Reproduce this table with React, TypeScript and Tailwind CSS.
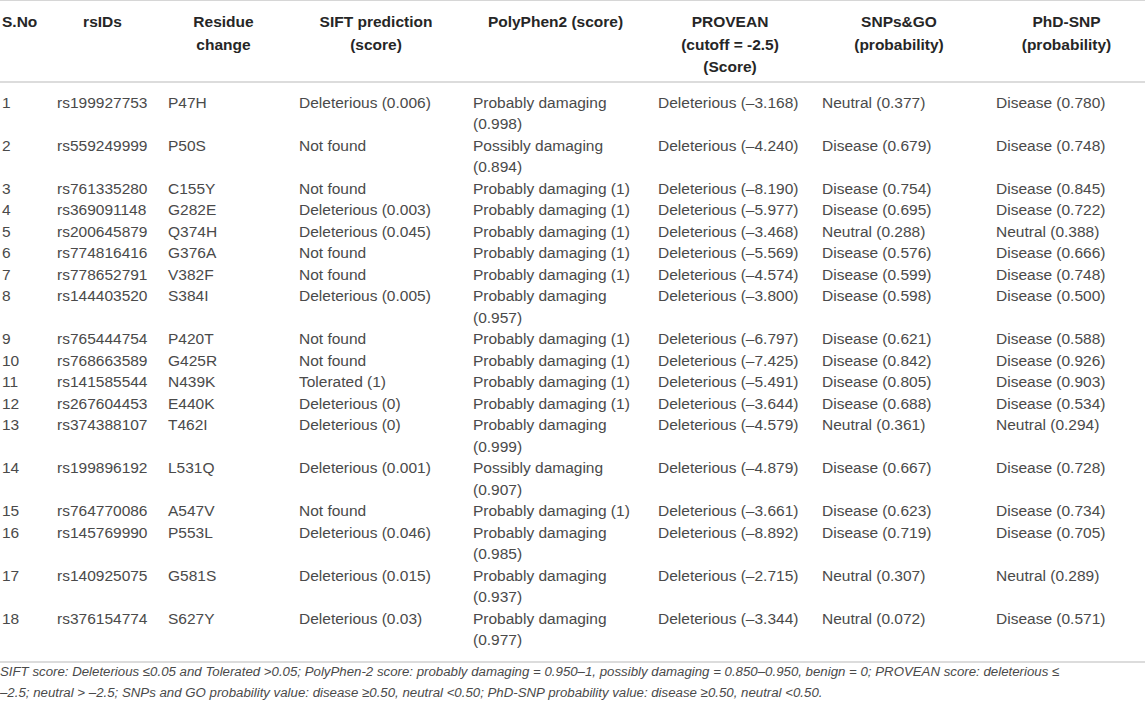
type Row = {
	no: string;
	id: string;
	change: string;
	sift: string;
	poly: string[];
	provean: string;
	snps: string;
	phd: string;
};

const rows: Row[] = [
	{ no: "1", id: "rs199927753", change: "P47H", sift: "Deleterious (0.006)", poly: ["Probably damaging", "(0.998)"], provean: "Deleterious (–3.168)", snps: "Neutral (0.377)", phd: "Disease (0.780)" },
	{ no: "2", id: "rs559249999", change: "P50S", sift: "Not found", poly: ["Possibly damaging", "(0.894)"], provean: "Deleterious (–4.240)", snps: "Disease (0.679)", phd: "Disease (0.748)" },
	{ no: "3", id: "rs761335280", change: "C155Y", sift: "Not found", poly: ["Probably damaging (1)"], provean: "Deleterious (–8.190)", snps: "Disease (0.754)", phd: "Disease (0.845)" },
	{ no: "4", id: "rs369091148", change: "G282E", sift: "Deleterious (0.003)", poly: ["Probably damaging (1)"], provean: "Deleterious (–5.977)", snps: "Disease (0.695)", phd: "Disease (0.722)" },
	{ no: "5", id: "rs200645879", change: "Q374H", sift: "Deleterious (0.045)", poly: ["Probably damaging (1)"], provean: "Deleterious (–3.468)", snps: "Neutral (0.288)", phd: "Neutral (0.388)" },
	{ no: "6", id: "rs774816416", change: "G376A", sift: "Not found", poly: ["Probably damaging (1)"], provean: "Deleterious (–5.569)", snps: "Disease (0.576)", phd: "Disease (0.666)" },
	{ no: "7", id: "rs778652791", change: "V382F", sift: "Not found", poly: ["Probably damaging (1)"], provean: "Deleterious (–4.574)", snps: "Disease (0.599)", phd: "Disease (0.748)" },
	{ no: "8", id: "rs144403520", change: "S384I", sift: "Deleterious (0.005)", poly: ["Probably damaging", "(0.957)"], provean: "Deleterious (–3.800)", snps: "Disease (0.598)", phd: "Disease (0.500)" },
	{ no: "9", id: "rs765444754", change: "P420T", sift: "Not found", poly: ["Probably damaging (1)"], provean: "Deleterious (–6.797)", snps: "Disease (0.621)", phd: "Disease (0.588)" },
	{ no: "10", id: "rs768663589", change: "G425R", sift: "Not found", poly: ["Probably damaging (1)"], provean: "Deleterious (–7.425)", snps: "Disease (0.842)", phd: "Disease (0.926)" },
	{ no: "11", id: "rs141585544", change: "N439K", sift: "Tolerated (1)", poly: ["Probably damaging (1)"], provean: "Deleterious (–5.491)", snps: "Disease (0.805)", phd: "Disease (0.903)" },
	{ no: "12", id: "rs267604453", change: "E440K", sift: "Deleterious (0)", poly: ["Probably damaging (1)"], provean: "Deleterious (–3.644)", snps: "Disease (0.688)", phd: "Disease (0.534)" },
	{ no: "13", id: "rs374388107", change: "T462I", sift: "Deleterious (0)", poly: ["Probably damaging", "(0.999)"], provean: "Deleterious (–4.579)", snps: "Neutral (0.361)", phd: "Neutral (0.294)" },
	{ no: "14", id: "rs199896192", change: "L531Q", sift: "Deleterious (0.001)", poly: ["Possibly damaging", "(0.907)"], provean: "Deleterious (–4.879)", snps: "Disease (0.667)", phd: "Disease (0.728)" },
	{ no: "15", id: "rs764770086", change: "A547V", sift: "Not found", poly: ["Probably damaging (1)"], provean: "Deleterious (–3.661)", snps: "Disease (0.623)", phd: "Disease (0.734)" },
	{ no: "16", id: "rs145769990", change: "P553L", sift: "Deleterious (0.046)", poly: ["Probably damaging", "(0.985)"], provean: "Deleterious (–8.892)", snps: "Disease (0.719)", phd: "Disease (0.705)" },
	{ no: "17", id: "rs140925075", change: "G581S", sift: "Deleterious (0.015)", poly: ["Probably damaging", "(0.937)"], provean: "Deleterious (–2.715)", snps: "Neutral (0.307)", phd: "Neutral (0.289)" },
	{ no: "18", id: "rs376154774", change: "S627Y", sift: "Deleterious (0.03)", poly: ["Probably damaging", "(0.977)"], provean: "Deleterious (–3.344)", snps: "Neutral (0.072)", phd: "Disease (0.571)" },
];

const widths = ["w-[57px]", "w-[111px]", "w-[131px]", "w-[174px]", "w-[185px]", "w-[164px]", "w-[174px]", "w-[149px]"];

const headers: string[][] = [
	["S.No"],
	["rsIDs"],
	["Residue", "change"],
	["SIFT prediction", "(score)"],
	["PolyPhen2 (score)"],
	["PROVEAN", "(cutoff = -2.5)", "(Score)"],
	["SNPs&GO", "(probability)"],
	["PhD-SNP", "(probability)"],
];

function Cell({ children, first, last }: { children: React.ReactNode; first?: boolean; last?: boolean }) {
	return (
		<td
			className={`align-top whitespace-nowrap pr-[20px] ${first ? "pt-[9px]" : ""} ${last ? "pb-[10px]" : ""}`}
		>
			{children}
		</td>
	);
}

export default function App() {
	return (
		<div className="w-[1145px] h-[703px] overflow-hidden bg-white font-['Liberation_Sans',Arial,sans-serif] text-[15.5px] leading-[21.5px] text-[#4a4a4a]">
			<table className="w-[1145px] table-fixed border-collapse border-t border-[#d6d6d6]">
				<colgroup>
					{widths.map((w) => (
						<col key={w} className={w} />
					))}
				</colgroup>
				<thead>
					<tr className="border-b-2 border-[#dcdcdc]">
						{headers.map((lines, i) => (
							<th
								key={i}
								className={`h-[81px] align-top pt-[10px] font-bold text-[#262626] leading-[22.5px] ${
									i === 0 ? "text-left pl-[2px]" : "text-center"
								} ${i === 7 ? "pr-[8px]" : "pr-[20px]"}`}
							>
								{lines.map((l) => (
									<div key={l}>{l}</div>
								))}
							</th>
						))}
					</tr>
				</thead>
				<tbody>
					{rows.map((r, i) => {
						const first = i === 0;
						const last = i === rows.length - 1;
						return (
							<tr key={r.no} className={last ? "border-b-2 border-[#dcdcdc]" : ""}>
								<Cell first={first} last={last}>
									<span className="pl-[2px]">{r.no}</span>
								</Cell>
								<Cell first={first} last={last}>{r.id}</Cell>
								<Cell first={first} last={last}>{r.change}</Cell>
								<Cell first={first} last={last}>{r.sift}</Cell>
								<Cell first={first} last={last}>
									{r.poly.map((p) => (
										<div key={p}>{p}</div>
									))}
								</Cell>
								<Cell first={first} last={last}>{r.provean}</Cell>
								<Cell first={first} last={last}>{r.snps}</Cell>
								<Cell first={first} last={last}>{r.phd}</Cell>
							</tr>
						);
					})}
				</tbody>
			</table>
			<p className="-mt-[2px] italic text-[13.25px] leading-[21px] text-[#4a4a4a] whitespace-nowrap">
				SIFT score: Deleterious ≤0.05 and Tolerated &gt;0.05; PolyPhen-2 score: probably damaging = 0.950–1, possibly
				damaging = 0.850–0.950, benign = 0; PROVEAN score: deleterious ≤
				<br />
				–2.5; neutral &gt; –2.5; SNPs and GO probability value: disease ≥0.50, neutral &lt;0.50; PhD-SNP probability value:
				disease ≥0.50, neutral &lt;0.50.
			</p>
		</div>
	);
}
